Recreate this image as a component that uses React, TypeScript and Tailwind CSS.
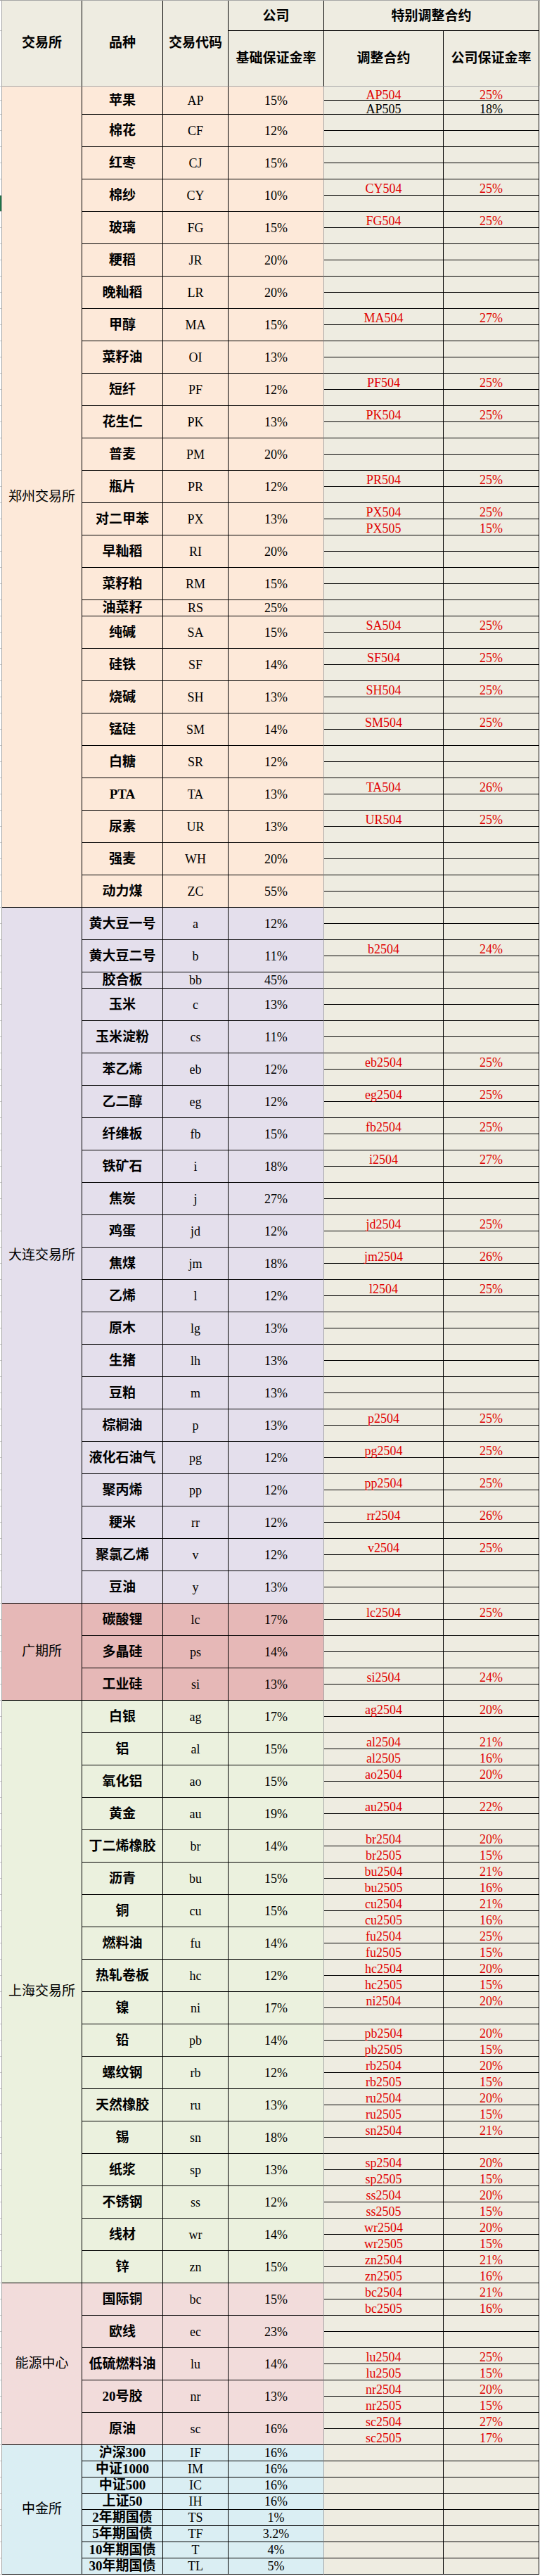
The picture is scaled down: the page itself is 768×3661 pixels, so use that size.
import React from 'react';

type Sub = { c: string; r: string; black?: boolean };
type Prod = { n: string; code: string; rate: string; subs: Sub[]; rows: 1 | 2; small?: boolean };
type Ex = { name: string; bg: string; items: Prod[] };

function P(
  n: string,
  code: string,
  rate: string,
  contracts: [string, string, boolean?][] = [],
  rows: 1 | 2 = 2,
  small = false
): Prod {
  const subs: Sub[] = [];
  for (let i = 0; i < rows; i++) {
    const c = contracts[i];
    subs.push(c ? { c: c[0], r: c[1], black: !!c[2] } : { c: '', r: '' });
  }
  return { n, code, rate, subs, rows, small };
}

const exchanges: Ex[] = [
  {
    name: '郑州交易所',
    bg: 'bg-[#fde9d9]',
    items: [
      P('苹果', 'AP', '15%', [['AP504', '25%'], ['AP505', '18%', true]], 2, true),
      P('棉花', 'CF', '12%'),
      P('红枣', 'CJ', '15%'),
      P('棉纱', 'CY', '10%', [['CY504', '25%']]),
      P('玻璃', 'FG', '15%', [['FG504', '25%']]),
      P('粳稻', 'JR', '20%'),
      P('晚籼稻', 'LR', '20%'),
      P('甲醇', 'MA', '15%', [['MA504', '27%']]),
      P('菜籽油', 'OI', '13%'),
      P('短纤', 'PF', '12%', [['PF504', '25%']]),
      P('花生仁', 'PK', '13%', [['PK504', '25%']]),
      P('普麦', 'PM', '20%'),
      P('瓶片', 'PR', '12%', [['PR504', '25%']]),
      P('对二甲苯', 'PX', '13%', [['PX504', '25%'], ['PX505', '15%']]),
      P('早籼稻', 'RI', '20%'),
      P('菜籽粕', 'RM', '15%'),
      P('油菜籽', 'RS', '25%', [], 1),
      P('纯碱', 'SA', '15%', [['SA504', '25%']]),
      P('硅铁', 'SF', '14%', [['SF504', '25%']]),
      P('烧碱', 'SH', '13%', [['SH504', '25%']]),
      P('锰硅', 'SM', '14%', [['SM504', '25%']]),
      P('白糖', 'SR', '12%'),
      P('PTA', 'TA', '13%', [['TA504', '26%']]),
      P('尿素', 'UR', '13%', [['UR504', '25%']]),
      P('强麦', 'WH', '20%'),
      P('动力煤', 'ZC', '55%'),
    ],
  },
  {
    name: '大连交易所',
    bg: 'bg-[#e4dfec]',
    items: [
      P('黄大豆一号', 'a', '12%'),
      P('黄大豆二号', 'b', '11%', [['b2504', '24%']]),
      P('胶合板', 'bb', '45%', [], 1),
      P('玉米', 'c', '13%'),
      P('玉米淀粉', 'cs', '11%'),
      P('苯乙烯', 'eb', '12%', [['eb2504', '25%']]),
      P('乙二醇', 'eg', '12%', [['eg2504', '25%']]),
      P('纤维板', 'fb', '15%', [['fb2504', '25%']]),
      P('铁矿石', 'i', '18%', [['i2504', '27%']]),
      P('焦炭', 'j', '27%'),
      P('鸡蛋', 'jd', '12%', [['jd2504', '25%']]),
      P('焦煤', 'jm', '18%', [['jm2504', '26%']]),
      P('乙烯', 'l', '12%', [['l2504', '25%']]),
      P('原木', 'lg', '13%'),
      P('生猪', 'lh', '13%'),
      P('豆粕', 'm', '13%'),
      P('棕榈油', 'p', '13%', [['p2504', '25%']]),
      P('液化石油气', 'pg', '12%', [['pg2504', '25%']]),
      P('聚丙烯', 'pp', '12%', [['pp2504', '25%']]),
      P('粳米', 'rr', '12%', [['rr2504', '26%']]),
      P('聚氯乙烯', 'v', '12%', [['v2504', '25%']]),
      P('豆油', 'y', '13%'),
    ],
  },
  {
    name: '广期所',
    bg: 'bg-[#e6b8b7]',
    items: [
      P('碳酸锂', 'lc', '17%', [['lc2504', '25%']]),
      P('多晶硅', 'ps', '14%'),
      P('工业硅', 'si', '13%', [['si2504', '24%']]),
    ],
  },
  {
    name: '上海交易所',
    bg: 'bg-[#ebf1de]',
    items: [
      P('白银', 'ag', '17%', [['ag2504', '20%']]),
      P('铝', 'al', '15%', [['al2504', '21%'], ['al2505', '16%']]),
      P('氧化铝', 'ao', '15%', [['ao2504', '20%']]),
      P('黄金', 'au', '19%', [['au2504', '22%']]),
      P('丁二烯橡胶', 'br', '14%', [['br2504', '20%'], ['br2505', '15%']]),
      P('沥青', 'bu', '15%', [['bu2504', '21%'], ['bu2505', '16%']]),
      P('铜', 'cu', '15%', [['cu2504', '21%'], ['cu2505', '16%']]),
      P('燃料油', 'fu', '14%', [['fu2504', '25%'], ['fu2505', '15%']]),
      P('热轧卷板', 'hc', '12%', [['hc2504', '20%'], ['hc2505', '15%']]),
      P('镍', 'ni', '17%', [['ni2504', '20%']]),
      P('铅', 'pb', '14%', [['pb2504', '20%'], ['pb2505', '15%']]),
      P('螺纹钢', 'rb', '12%', [['rb2504', '20%'], ['rb2505', '15%']]),
      P('天然橡胶', 'ru', '13%', [['ru2504', '20%'], ['ru2505', '15%']]),
      P('锡', 'sn', '18%', [['sn2504', '21%']]),
      P('纸浆', 'sp', '13%', [['sp2504', '20%'], ['sp2505', '15%']]),
      P('不锈钢', 'ss', '12%', [['ss2504', '20%'], ['ss2505', '15%']]),
      P('线材', 'wr', '14%', [['wr2504', '20%'], ['wr2505', '15%']]),
      P('锌', 'zn', '15%', [['zn2504', '21%'], ['zn2505', '16%']]),
    ],
  },
  {
    name: '能源中心',
    bg: 'bg-[#f2dcdb]',
    items: [
      P('国际铜', 'bc', '15%', [['bc2504', '21%'], ['bc2505', '16%']]),
      P('欧线', 'ec', '23%'),
      P('低硫燃料油', 'lu', '14%', [['lu2504', '25%'], ['lu2505', '15%']]),
      P('20号胶', 'nr', '13%', [['nr2504', '20%'], ['nr2505', '15%']]),
      P('原油', 'sc', '16%', [['sc2504', '27%'], ['sc2505', '17%']]),
    ],
  },
  {
    name: '中金所',
    bg: 'bg-[#daeef3]',
    items: [
      P('沪深300', 'IF', '16%', [], 1),
      P('中证1000', 'IM', '16%', [], 1),
      P('中证500', 'IC', '16%', [], 1),
      P('上证50', 'IH', '16%', [], 1),
      P('2年期国债', 'TS', '1%', [], 1),
      P('5年期国债', 'TF', '3.2%', [], 1),
      P('10年期国债', 'T', '4%', [], 1),
      P('30年期国债', 'TL', '5%', [], 1),
    ],
  },
];

function Row({ p, bg }: { p: Prod; bg: string }) {
  const subH = p.small ? 'h-[20px]' : 'h-[23px]';
  const total = p.small ? 'h-[40px]' : p.rows === 1 ? 'h-[23px]' : 'h-[46px]';
  const lead = p.small ? 'leading-[13px]' : 'leading-[17px]';
  return (
    <div className={`flex ${total}`}>
      <div className={`flex w-[115px] items-center justify-center border-r border-b border-black text-[19px] font-bold leading-[22px] whitespace-nowrap ${bg}`}>
        {p.n}
      </div>
      <div className={`flex w-[93px] items-center justify-center border-r border-b border-black leading-[22px] ${bg}`}>
        {p.code}
      </div>
      <div className={`flex w-[136px] items-center justify-center border-r border-b border-r-[#a6a6a6] border-b-black leading-[22px] ${bg}`}>
        {p.rate}
      </div>
      <div className="flex flex-col">
        {p.subs.map((s, i) => (
          <div key={i} className={`flex ${subH} ${s.black ? 'text-black' : 'text-[#e00000]'}`}>
            <div className={`flex w-[170px] items-end justify-center border-r border-b border-black bg-[#eeece1] ${lead}`}>
              {s.c}
            </div>
            <div className={`flex w-[136px] items-end justify-center border-r border-b border-black bg-[#eeece1] ${lead}`}>
              {s.r}
            </div>
          </div>
        ))}
      </div>
    </div>
  );
}

function Exchange({ ex }: { ex: Ex }) {
  const ticks: { k: string; small: boolean; green: boolean }[] = [];
  ex.items.forEach((p) => {
    p.subs.forEach((_, i) => {
      ticks.push({ k: p.code + i, small: !!p.small, green: p.code === 'CY' && i === 1 });
    });
  });
  return (
    <div className="flex">
      <div className="flex w-[3px] flex-col border-r border-[#a6a6a6] bg-white">
        {ticks.map((t) => (
          <div
            key={t.k}
            className={`${t.small ? 'h-[20px]' : 'h-[23px]'} border-b border-[#c8c8c8] ${t.green ? 'bg-[#217346]' : ''}`}
          />
        ))}
      </div>
      <div className={`flex w-[114px] items-center justify-center border-r border-b border-black text-[19px] ${ex.bg}`}>
        {ex.name}
      </div>
      <div className="flex flex-col">
        {ex.items.map((p) => (
          <Row key={p.code} p={p} bg={ex.bg} />
        ))}
      </div>
    </div>
  );
}

function Header() {
  return (
    <div className="flex border-t border-[#a6a6a6] bg-[#eeece1] text-[19px] font-bold">
      <div className="flex w-[3px] flex-col border-r border-[#a6a6a6] bg-white">
        <div className="h-[43px] border-b border-[#c8c8c8]" />
        <div className="h-[79px] border-b border-[#c8c8c8]" />
      </div>
      <div className="flex h-[122px] w-[114px] items-center justify-center border-r border-b border-r-black border-b-[#a6a6a6]">
        交易所
      </div>
      <div className="flex h-[122px] w-[115px] items-center justify-center border-r border-b border-r-black border-b-[#a6a6a6]">
        品种
      </div>
      <div className="flex h-[122px] w-[93px] items-center justify-center border-r border-b border-r-black border-b-[#a6a6a6]">
        交易代码
      </div>
      <div className="flex flex-col">
        <div className="flex h-[43px]">
          <div className="flex w-[136px] items-center justify-center border-r border-b border-black pt-[2px]">
            公司
          </div>
          <div className="flex w-[306px] items-center justify-center border-r border-b border-black pt-[2px]">
            特别调整合约
          </div>
        </div>
        <div className="flex h-[79px]">
          <div className="flex w-[136px] items-center justify-center border-r border-b border-r-black border-b-[#a6a6a6]">
            基础保证金率
          </div>
          <div className="flex w-[170px] items-center justify-center border-r border-b border-r-black border-b-[#a6a6a6]">
            调整合约
          </div>
          <div className="flex w-[136px] items-center justify-center border-r border-b border-r-black border-b-[#a6a6a6]">
            公司保证金率
          </div>
        </div>
      </div>
    </div>
  );
}

export default function App() {
  return (
    <div className="min-h-[3661px] w-[768px] bg-white font-['Liberation_Serif','Noto_Sans_CJK_SC',serif] text-[18px] text-black">
      <Header />
      {exchanges.map((ex) => (
        <Exchange key={ex.name} ex={ex} />
      ))}
    </div>
  );
}
